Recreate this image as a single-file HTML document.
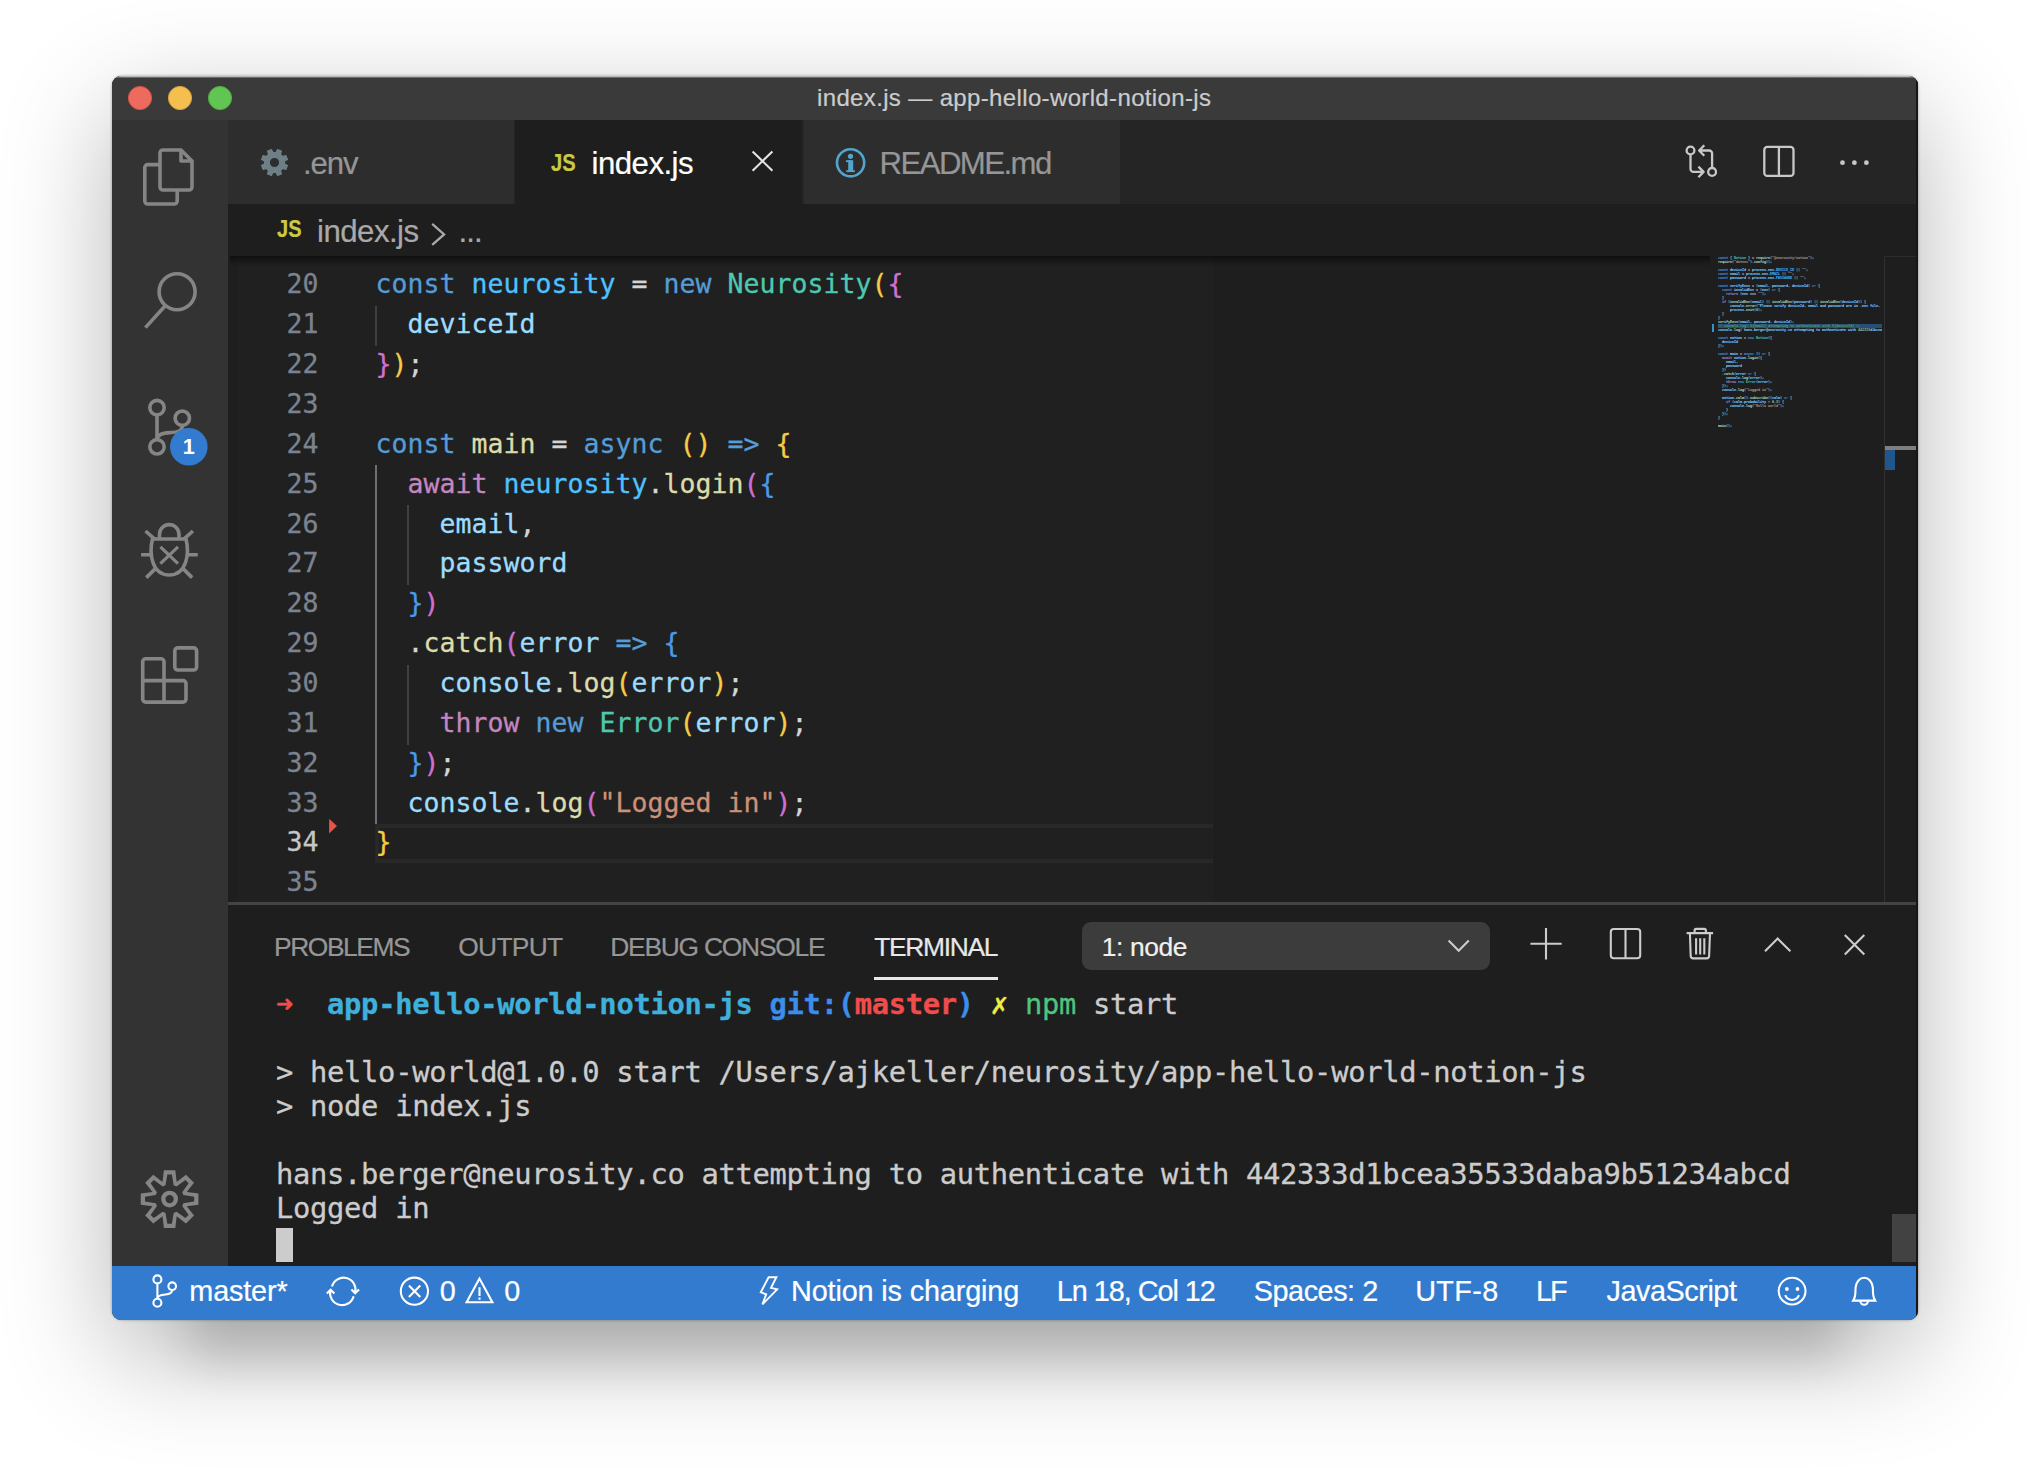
<!DOCTYPE html>
<html lang="en">
<head>
<meta charset="utf-8">
<title>index.js — app-hello-world-notion-js</title>
<style>
html,body{margin:0;padding:0;background:#fff;}
body{width:2030px;height:1468px;overflow:hidden;position:relative;font-family:"Liberation Sans",sans-serif;}
#win{position:absolute;left:112px;top:76px;width:1806px;height:1244px;border-radius:9px;overflow:hidden;background:#1e1e1e;}
#shadow{position:absolute;left:112px;top:76px;width:1806px;height:1244px;border-radius:10px;box-shadow:0 34px 108px rgba(0,0,0,.29),0 122px 41px -80px rgba(0,0,0,.12),0 0 3px rgba(0,0,0,.35);}
#pg{position:absolute;left:-112px;top:-76px;width:2030px;height:1468px;}
#pg div,#pg span,#pg svg{position:absolute;}
.t{white-space:pre;line-height:1;-webkit-text-stroke:.22px;}
/* regions */
#titlebar{left:112px;top:76px;width:1806px;height:44px;background:#3a3a3a;}
#titlehi{left:112px;top:76px;width:1806px;height:2px;background:linear-gradient(to bottom,#b8b8b8 0,#b8b8b8 50%,#6c6c6c 50%,#6c6c6c 100%);}
#activity{left:112px;top:120px;width:116px;height:1146px;background:#333333;}
#tabbar{left:228px;top:120px;width:1690px;height:84px;background:#252526;}
#tab1{left:228px;top:120px;width:286px;height:84px;background:#2d2d2d;}
#tab2{left:515px;top:120px;width:287px;height:84px;background:#1e1e1e;}
#tab3{left:804px;top:120px;width:316px;height:84px;background:#2d2d2d;}
#crumbs{left:228px;top:204px;width:1690px;height:52px;background:#1e1e1e;}
#editor{left:228px;top:256px;width:1690px;height:646px;background:#1e1e1e;overflow:hidden;}
#panel{left:228px;top:902px;width:1690px;height:364px;background:#1e1e1e;}
#panelborder{left:228px;top:902px;width:1690px;height:3px;background:#444444;}
#status{left:112px;top:1266px;width:1806px;height:54px;background:#327bcf;}
.ig{width:2px;background:#404040;}
.ig.act{background:#707070;}
#mm span,#mm .mml{position:static!important;}
.tl,.cl,.ln{-webkit-text-stroke:.3px;}
.cl,.ln{font-family:"DejaVu Sans Mono","Liberation Mono",monospace;font-size:26.5px;letter-spacing:0.046px;white-space:pre;line-height:1;}.ln{color:#7b8390;left:286.6px;}.cl{left:375.4px;color:#d4d4d4;}.cl span{position:static!important;}
.tl{font-family:"DejaVu Sans Mono","Liberation Mono",monospace;font-size:28.8px;letter-spacing:-0.319px;white-space:pre;line-height:1;color:#cccccc;left:276.0px;}.tl span{position:static!important;}.tl b{font-weight:700;}
</style>
</head>
<body>
<div id="shadow"></div>
<div id="win"><div id="pg">
<div id="titlebar"></div><div id="titlehi"></div>
<div id="activity"></div>
<div id="tabbar"></div><div id="tab1"></div><div id="tab2"></div><div id="tab3"></div>
<div id="crumbs"></div>
<div id="editor"></div>
<div id="panel"></div><div id="panelborder"></div>
<div id="status"></div>
<div id="edlight" style="left:237px;top:256px;width:976px;height:646px;background:#202020;"></div>
<div id="edshadow" style="left:230px;top:256px;width:1480px;height:10px;background:linear-gradient(to bottom,rgba(0,0,0,.55) 0,rgba(0,0,0,.28) 40%,rgba(0,0,0,0) 100%);"></div>
<!-- indent guides -->
<div class="ig" style="left:375.2px;top:306.1px;height:40.3px;"></div>
<div class="ig act" style="left:375.2px;top:464.6px;height:359.6px;"></div>
<div class="ig" style="left:406.9px;top:505.3px;height:79.9px;"></div>
<div class="ig" style="left:406.9px;top:664.7px;height:79.9px;"></div>
<!-- current line -->
<div id="curline" style="left:375.2px;top:824.2px;width:837.8px;height:39px;box-sizing:border-box;border:4px solid #282828;border-right:0;"></div>
<!-- deleted-lines gutter triangle -->
<svg style="left:328px;top:817px" width="12" height="18" viewBox="0 0 12 18"><path d="M1.1 1.7 L9 9.1 L1.1 16.5 Z" fill="#e5534b"/></svg>
<!-- overview ruler -->
<div style="left:1884px;top:256px;width:1px;height:646px;background:#303030;"></div>
<div style="left:1884px;top:256px;width:32px;height:1px;background:#2c2c2c;"></div>
<div style="left:1885px;top:446.2px;width:31px;height:4.2px;background:#7f7f7f;"></div>
<div style="left:1885px;top:450.3px;width:10px;height:20px;background:#20568c;"></div>
<!-- panel bits -->
<div style="left:874px;top:977px;width:124px;height:2.5px;background:#e7e7e7;"></div>
<div id="select" style="left:1082px;top:922px;width:408px;height:48px;border-radius:9px;background:#3c3c3c;"></div>
<div id="tcursor" style="left:276.3px;top:1228px;width:16.8px;height:34px;background:#cccccc;"></div>
<div id="tscroll" style="left:1892px;top:1214px;width:24px;height:48px;background:#424242;"></div>
<!-- right window edge -->
<div style="left:1916px;top:76px;width:2px;height:1244px;background:#161616;"></div>

<div style="left:1717.8px;top:324.0px;width:164.2px;height:4.0px;background:#264f78;"></div>
<div style="left:1711.8px;top:324.0px;width:2.4px;height:8.0px;background:#3a90c8;"></div>
<div id="mm" style="left:1717.8px;top:256.0px;width:789.89px;height:828.42px;overflow:hidden;transform:scale(0.20762);transform-origin:0 0;font-family:'DejaVu Sans Mono','Liberation Mono',monospace;font-weight:700;font-size:16.0px;line-height:19.266px;white-space:pre;color:#d4d4d4;opacity:.95;"><div style="position:static" class="mml"><span style="color:#569cd6">const</span> { <span style="color:#4ec9b0">Notion</span> } = <span style="color:#dcdcaa">require</span>(<span style="color:#ce9178">&quot;@neurosity/notion&quot;</span>);
<span style="color:#dcdcaa">require</span>(<span style="color:#ce9178">&quot;dotenv&quot;</span>).<span style="color:#dcdcaa">config</span>();

<span style="color:#569cd6">const</span> <span style="color:#9cdcfe">deviceId</span> = <span style="color:#9cdcfe">process</span>.<span style="color:#9cdcfe">env</span>.<span style="color:#4fc1ff">DEVICE_ID</span> || <span style="color:#ce9178">&quot;&quot;</span>;
<span style="color:#569cd6">const</span> <span style="color:#9cdcfe">email</span> = <span style="color:#9cdcfe">process</span>.<span style="color:#9cdcfe">env</span>.<span style="color:#4fc1ff">EMAIL</span> || <span style="color:#ce9178">&quot;&quot;</span>;
<span style="color:#569cd6">const</span> <span style="color:#9cdcfe">password</span> = <span style="color:#9cdcfe">process</span>.<span style="color:#9cdcfe">env</span>.<span style="color:#4fc1ff">PASSWORD</span> || <span style="color:#ce9178">&quot;&quot;</span>;

<span style="color:#569cd6">const</span> <span style="color:#9cdcfe">verifyEnvs</span> = (<span style="color:#9cdcfe">email</span>, <span style="color:#9cdcfe">password</span>, <span style="color:#9cdcfe">deviceId</span>) <span style="color:#569cd6">=&gt;</span> {
  <span style="color:#569cd6">const</span> <span style="color:#9cdcfe">invalidEnv</span> = (<span style="color:#9cdcfe">env</span>) <span style="color:#569cd6">=&gt;</span> {
    <span style="color:#c586c0">return</span> (<span style="color:#9cdcfe">env</span> === <span style="color:#ce9178">&quot;&quot;</span>);
  }
  <span style="color:#c586c0">if</span> (<span style="color:#dcdcaa">invalidEnv</span>(<span style="color:#9cdcfe">email</span>) || <span style="color:#dcdcaa">invalidEnv</span>(<span style="color:#9cdcfe">password</span>) || <span style="color:#dcdcaa">invalidEnv</span>(<span style="color:#9cdcfe">deviceId</span>)) {
      <span style="color:#9cdcfe">console</span>.<span style="color:#dcdcaa">error</span>(&quot;<span style="color:#9cdcfe">Please</span> <span style="color:#9cdcfe">verify</span> <span style="color:#9cdcfe">deviceId</span>, <span style="color:#9cdcfe">email</span> <span style="color:#9cdcfe">and</span> <span style="color:#9cdcfe">password</span> <span style="color:#9cdcfe">are</span> <span style="color:#9cdcfe">in</span> .<span style="color:#9cdcfe">env</span> <span style="color:#9cdcfe">file</span>, 
      <span style="color:#9cdcfe">process</span>.<span style="color:#dcdcaa">exit</span>(<span style="color:#b5cea8">0</span>);
  }
}
<span style="color:#dcdcaa">verifyEnvs</span>(<span style="color:#9cdcfe">email</span>, <span style="color:#9cdcfe">password</span>, <span style="color:#9cdcfe">deviceId</span>);
<span style="color:#6a9955">// console.log(`${email} attempting to authenticate with ${deviceId}`);</span>
<span style="color:#9cdcfe">console</span>.<span style="color:#dcdcaa">log</span>(`<span style="color:#9cdcfe">hans</span>.<span style="color:#9cdcfe">berger</span>@<span style="color:#9cdcfe">neurosity</span>.<span style="color:#9cdcfe">co</span> <span style="color:#9cdcfe">attempting</span> <span style="color:#9cdcfe">to</span> <span style="color:#9cdcfe">authenticate</span> <span style="color:#9cdcfe">with</span> <span style="color:#b5cea8">442333</span><span style="color:#9cdcfe">d1bcea</span>

<span style="color:#569cd6">const</span> <span style="color:#9cdcfe">notion</span> = <span style="color:#569cd6">new</span> <span style="color:#4ec9b0">Notion</span>({
  <span style="color:#9cdcfe">deviceId</span>
});

<span style="color:#569cd6">const</span> <span style="color:#9cdcfe">main</span> = <span style="color:#569cd6">async</span> () <span style="color:#569cd6">=&gt;</span> {
  <span style="color:#c586c0">await</span> <span style="color:#9cdcfe">notion</span>.<span style="color:#dcdcaa">login</span>({
    <span style="color:#9cdcfe">email</span>,
    <span style="color:#9cdcfe">password</span>
  })
  .<span style="color:#dcdcaa">catch</span>(<span style="color:#9cdcfe">error</span> <span style="color:#569cd6">=&gt;</span> {
    <span style="color:#9cdcfe">console</span>.<span style="color:#dcdcaa">log</span>(<span style="color:#9cdcfe">error</span>);
    <span style="color:#c586c0">throw</span> <span style="color:#569cd6">new</span> <span style="color:#4ec9b0">Error</span>(<span style="color:#9cdcfe">error</span>);
  });
  <span style="color:#9cdcfe">console</span>.<span style="color:#dcdcaa">log</span>(<span style="color:#ce9178">&quot;Logged in&quot;</span>);

  <span style="color:#9cdcfe">notion</span>.<span style="color:#dcdcaa">calm</span>().<span style="color:#dcdcaa">subscribe</span>((<span style="color:#9cdcfe">calm</span>) <span style="color:#569cd6">=&gt;</span> {
    <span style="color:#c586c0">if</span> (<span style="color:#9cdcfe">calm</span>.<span style="color:#9cdcfe">probability</span> &gt; <span style="color:#b5cea8">0.3</span>) {
      <span style="color:#9cdcfe">console</span>.<span style="color:#dcdcaa">log</span>(<span style="color:#ce9178">&quot;Hello world&quot;</span>);
    }
  });
}

<span style="color:#dcdcaa">main</span>();</div></div>
<span class="t" style='left:817.00px;top:85.90px;font-size:24px;color:#cccccc;letter-spacing:0.357px;'>index.js — app-hello-world-notion-js</span>
<span class="t" style='left:303.00px;top:147.50px;font-size:31.2px;color:#969696;letter-spacing:-1.118px;'>.env</span>
<span class="t" style='left:591.60px;top:147.50px;font-size:31.2px;color:#ffffff;letter-spacing:-0.536px;'>index.js</span>
<span class="t" style='left:879.50px;top:147.50px;font-size:31.2px;color:#969696;letter-spacing:-1.572px;'>README.md</span>
<span class="t" style='left:317.00px;top:215.70px;font-size:31.2px;color:#a9a9a9;letter-spacing:-0.522px;'>index.js</span>
<span class="t" style='left:458.50px;top:215.70px;font-size:31.2px;color:#a9a9a9;letter-spacing:-0.915px;'>...</span>
<span class="t" style='left:274.00px;top:933.50px;font-size:26.4px;color:#969696;letter-spacing:-1.436px;'>PROBLEMS</span>
<span class="t" style='left:458.30px;top:933.50px;font-size:26.4px;color:#969696;letter-spacing:-0.733px;'>OUTPUT</span>
<span class="t" style='left:610.20px;top:933.50px;font-size:26.4px;color:#969696;letter-spacing:-1.236px;'>DEBUG CONSOLE</span>
<span class="t" style='left:874.30px;top:933.50px;font-size:26.4px;color:#e7e7e7;letter-spacing:-1.337px;'>TERMINAL</span>
<span class="t" style='left:1101.80px;top:934.00px;font-size:26.4px;color:#f0f0f0;letter-spacing:-0.396px;'>1: node</span>
<span class="t" style='left:189.30px;top:1276.70px;font-size:28.8px;color:#ffffff;letter-spacing:-0.151px;'>master*</span>
<span class="t" style='left:439.70px;top:1276.70px;font-size:28.8px;color:#ffffff;'>0</span>
<span class="t" style='left:504.30px;top:1276.70px;font-size:28.8px;color:#ffffff;'>0</span>
<span class="t" style='left:791.00px;top:1276.70px;font-size:28.8px;color:#ffffff;letter-spacing:-0.134px;'>Notion is charging</span>
<span class="t" style='left:1056.70px;top:1276.70px;font-size:28.8px;color:#ffffff;letter-spacing:-1.016px;'>Ln 18, Col 12</span>
<span class="t" style='left:1253.80px;top:1276.70px;font-size:28.8px;color:#ffffff;letter-spacing:-0.456px;'>Spaces: 2</span>
<span class="t" style='left:1415.20px;top:1276.70px;font-size:28.8px;color:#ffffff;letter-spacing:0.358px;'>UTF-8</span>
<span class="t" style='left:1535.90px;top:1276.70px;font-size:28.8px;color:#ffffff;letter-spacing:-2.015px;'>LF</span>
<span class="t" style='left:1606.60px;top:1276.70px;font-size:28.8px;color:#ffffff;letter-spacing:-0.460px;'>JavaScript</span>
<span class="t" style="left:550.5px;top:151.25px;font-size:24.7px;font-weight:700;color:#cbcb41;transform:scaleX(.815);transform-origin:0 0;">JS</span>
<span class="t" style="left:277px;top:217.55px;font-size:23.7px;font-weight:700;color:#cbcb41;transform:scaleX(.845);transform-origin:0 0;">JS</span>

<div class="ln" style="top:271.48px;">20</div>
<div class="cl" style="top:271.48px;"><span style="color:#569cd6">const</span> <span style="color:#4fc1ff">neurosity</span> = <span style="color:#569cd6">new</span> <span style="color:#4ec9b0">Neurosity</span><span style="color:#f7cb45">(</span><span style="color:#d06fd0">{</span></div>
<div class="ln" style="top:311.33px;">21</div>
<div class="cl" style="top:311.33px;">  <span style="color:#9cdcfe">deviceId</span></div>
<div class="ln" style="top:351.18px;">22</div>
<div class="cl" style="top:351.18px;"><span style="color:#d06fd0">}</span><span style="color:#f7cb45">)</span>;</div>
<div class="ln" style="top:391.03px;">23</div>
<div class="ln" style="top:430.88px;">24</div>
<div class="cl" style="top:430.88px;"><span style="color:#569cd6">const</span> <span style="color:#dcdcaa">main</span> = <span style="color:#569cd6">async</span> <span style="color:#f7cb45">()</span> <span style="color:#569cd6">=&gt;</span> <span style="color:#f7cb45">{</span></div>
<div class="ln" style="top:470.73px;">25</div>
<div class="cl" style="top:470.73px;">  <span style="color:#c586c0">await</span> <span style="color:#4fc1ff">neurosity</span>.<span style="color:#dcdcaa">login</span><span style="color:#d06fd0">(</span><span style="color:#4a9ae8">{</span></div>
<div class="ln" style="top:510.58px;">26</div>
<div class="cl" style="top:510.58px;">    <span style="color:#9cdcfe">email</span>,</div>
<div class="ln" style="top:550.43px;">27</div>
<div class="cl" style="top:550.43px;">    <span style="color:#9cdcfe">password</span></div>
<div class="ln" style="top:590.28px;">28</div>
<div class="cl" style="top:590.28px;">  <span style="color:#4a9ae8">}</span><span style="color:#d06fd0">)</span></div>
<div class="ln" style="top:630.13px;">29</div>
<div class="cl" style="top:630.13px;">  .<span style="color:#dcdcaa">catch</span><span style="color:#d06fd0">(</span><span style="color:#9cdcfe">error</span> <span style="color:#569cd6">=&gt;</span> <span style="color:#4a9ae8">{</span></div>
<div class="ln" style="top:669.98px;">30</div>
<div class="cl" style="top:669.98px;">    <span style="color:#9cdcfe">console</span>.<span style="color:#dcdcaa">log</span><span style="color:#f7cb45">(</span><span style="color:#9cdcfe">error</span><span style="color:#f7cb45">)</span>;</div>
<div class="ln" style="top:709.83px;">31</div>
<div class="cl" style="top:709.83px;">    <span style="color:#c586c0">throw</span> <span style="color:#569cd6">new</span> <span style="color:#4ec9b0">Error</span><span style="color:#f7cb45">(</span><span style="color:#9cdcfe">error</span><span style="color:#f7cb45">)</span>;</div>
<div class="ln" style="top:749.68px;">32</div>
<div class="cl" style="top:749.68px;">  <span style="color:#4a9ae8">}</span><span style="color:#d06fd0">)</span>;</div>
<div class="ln" style="top:789.53px;">33</div>
<div class="cl" style="top:789.53px;">  <span style="color:#9cdcfe">console</span>.<span style="color:#dcdcaa">log</span><span style="color:#d06fd0">(</span><span style="color:#ce9178">&quot;Logged in&quot;</span><span style="color:#d06fd0">)</span>;</div>
<div class="ln" style="top:829.38px;color:#c6c6c6;">34</div>
<div class="cl" style="top:829.38px;"><span style="color:#f7cb45">}</span></div>
<div class="ln" style="top:869.23px;">35</div>
<div class="tl" style="top:989.94px;"><span style="color:#f14c4c"><b>➜</b></span>  <span style="color:#3fb0dc"><b>app-hello-world-notion-js</b></span> <span style="color:#3b8eea"><b>git:(</b></span><span style="color:#f14c4c"><b>master</b></span><span style="color:#3b8eea"><b>)</b></span> <span style="color:#eeee44"><b>✗</b></span> <span style="color:#4fc47e">npm</span> start</div>
<div class="tl" style="top:1057.94px;">&gt; hello-world@1.0.0 start /Users/ajkeller/neurosity/app-hello-world-notion-js</div>
<div class="tl" style="top:1091.94px;">&gt; node index.js</div>
<div class="tl" style="top:1159.94px;">hans.berger@neurosity.co attempting to authenticate with 442333d1bcea35533daba9b51234abcd</div>
<div class="tl" style="top:1193.94px;">Logged in</div>
<svg id="ico" width="2030" height="1468" viewBox="0 0 2030 1468" style="left:0;top:0" fill="none" stroke-linecap="butt" stroke-linejoin="round">
<circle cx="140" cy="98" r="11.6" fill="#ed6a5e" stroke="#d05348" stroke-width="1"/>
<circle cx="180" cy="98" r="11.6" fill="#f5bf4f" stroke="#d6a243" stroke-width="1"/>
<circle cx="220" cy="98" r="11.6" fill="#61c554" stroke="#52a842" stroke-width="1"/>
<g stroke="#858585" stroke-width="3.6">
<path d="M181 150 L192 161 V187 a3 3 0 0 1 -3 3 H163 a3 3 0 0 1 -3 -3 V153 a3 3 0 0 1 3 -3 Z"/>
<path d="M181 150 V161 H192" />
<path d="M160 164.6 H147.8 a3 3 0 0 0 -3 3 V201 a3 3 0 0 0 3 3 H174.2 a3 3 0 0 0 3 -3 V190"/>
<circle cx="177.1" cy="291.8" r="18"/>
<path d="M164.8 306.2 L145.4 327.6"/>
<circle cx="157" cy="407.6" r="7.2"/><circle cx="182.3" cy="418.2" r="7.2"/><circle cx="157" cy="446.8" r="7.2"/>
<path d="M157 414.8 V439.6"/>
<path d="M182.3 425.4 C182.3 431 178 432.3 170 432.6 C162 433 157 435 157 439.6"/>
<path d="M152.5 539 H186 C189.5 553 187 575 169.2 575 C151.5 575 149 553 152.5 539 Z"/>
<path d="M159.5 538.5 V534.4 A9.75 9.75 0 0 1 179 534.4 V538.5"/>
<path d="M145.5 531 L155 539.4 M192.9 531 L183.6 539.4 M141.1 554.7 H150.5 M188 554.7 H197.8 M146.3 577.6 L155.6 568.4 M192.1 577.6 L182.8 568.4"/>
<path d="M160.4 546.8 L178 563.6 M178 546.8 L160.4 563.6" stroke-width="3.2"/>
<path d="M145.7 658.8 H161 a3 3 0 0 1 3 3 V680.6 H183 a3 3 0 0 1 3 3 V699.1 a3 3 0 0 1 -3 3 H145.7 a3 3 0 0 1 -3 -3 V661.8 a3 3 0 0 1 3 -3 Z"/>
<path d="M142.7 680.6 H164 V702.1"/>
<rect x="174.8" y="647.9" width="21.8" height="22.1" rx="3"/>
</g>
<circle cx="188.8" cy="446.8" r="18.8" fill="#327bcf"/>
<text x="188.8" y="453.8" text-anchor="middle" font-family="Liberation Sans, sans-serif" font-weight="700" font-size="21.6" fill="#ffffff">1</text>
<path d="M162.52 1182.01 L163.89 1170.26 L175.31 1170.26 L176.68 1182.01 L185.96 1174.67 L194.03 1182.74 L186.69 1192.02 L198.44 1193.39 L198.44 1204.81 L186.69 1206.18 L194.03 1215.46 L185.96 1223.53 L176.68 1216.19 L175.31 1227.94 L163.89 1227.94 L162.52 1216.19 L153.24 1223.53 L145.17 1215.46 L152.51 1206.18 L140.76 1204.81 L140.76 1193.39 L152.51 1192.02 L145.17 1182.74 L153.24 1174.67 Z M165.51 1185.29 L167.32 1174.51 L171.88 1174.51 L173.69 1185.29 L176.47 1186.45 L185.38 1180.10 L188.60 1183.32 L182.25 1192.23 L183.41 1195.01 L194.19 1196.82 L194.19 1201.38 L183.41 1203.19 L182.25 1205.97 L188.60 1214.88 L185.38 1218.10 L176.47 1211.75 L173.69 1212.91 L171.88 1223.69 L167.32 1223.69 L165.51 1212.91 L162.73 1211.75 L153.82 1218.10 L150.60 1214.88 L156.95 1205.97 L155.79 1203.19 L145.01 1201.38 L145.01 1196.82 L155.79 1195.01 L156.95 1192.23 L150.60 1183.32 L153.82 1180.10 L162.73 1186.45 Z" fill="#858585" fill-rule="evenodd" stroke="none"/>
<circle cx="169.6" cy="1199.1" r="6.3" stroke="#858585" stroke-width="4.3"/>
<path d="M275.99 152.51 L277.60 149.57 L281.45 151.16 L280.51 154.38 L282.62 156.49 L285.84 155.55 L287.43 159.40 L284.49 161.01 L284.49 163.99 L287.43 165.60 L285.84 169.45 L282.62 168.51 L280.51 170.62 L281.45 173.84 L277.60 175.43 L275.99 172.49 L273.01 172.49 L271.40 175.43 L267.55 173.84 L268.49 170.62 L266.38 168.51 L263.16 169.45 L261.57 165.60 L264.51 163.99 L264.51 161.01 L261.57 159.40 L263.16 155.55 L266.38 156.49 L268.49 154.38 L267.55 151.16 L271.40 149.57 L273.01 152.51 Z M279.7 162.5 a5.2 5.2 0 1 0 -10.4 0 a5.2 5.2 0 1 0 10.4 0 Z" fill="#6d8086" fill-rule="evenodd" stroke="#6d8086" stroke-width="1.2"/>
<path d="M752.6 151.4 L772.4 170.8 M772.4 151.4 L752.6 170.8" stroke="#e4e4e4" stroke-width="2.1"/>
<circle cx="850.6" cy="162.8" r="13.6" stroke="#53a5cd" stroke-width="2.6"/>
<g fill="#53a5cd"><circle cx="850.5" cy="156.3" r="2.6"/><rect x="848.2" y="160.2" width="5" height="11"/><rect x="845.9" y="160.2" width="5" height="1.9"/><rect x="846.2" y="170.3" width="8.7" height="1.8"/></g>
<path d="M432.2 223.9 L444.1 234.4 L432.2 244.9" stroke="#a9a9a9" stroke-width="2.3" stroke-linejoin="miter"/>
<g stroke="#c8c8c8" stroke-width="2.3">
<circle cx="1690.5" cy="150.5" r="3.9"/><circle cx="1712.1" cy="171.9" r="3.9"/>
<path d="M1690.5 154.4 V168.9 a3 3 0 0 0 3 3 H1702.5 M1698.4 166.6 L1703.6 171.9 L1698.4 177.2"/>
<path d="M1712.1 168 V153.5 a3 3 0 0 0 -3 -3 H1700.2 M1704.3 145.2 L1699.1 150.5 L1704.3 155.8"/>
<rect x="1764.3" y="146.9" width="29.2" height="29" rx="3"/><path d="M1778.9 146.9 V175.9"/>
</g>
<circle cx="1842.5" cy="162.7" r="2.4" fill="#c8c8c8"/>
<circle cx="1854.4" cy="162.7" r="2.4" fill="#c8c8c8"/>
<circle cx="1866.4" cy="162.7" r="2.4" fill="#c8c8c8"/>
<g stroke="#cccccc" stroke-width="2.1">
<path d="M1448.6 940.6 L1458.7 950.8 L1468.8 940.6" stroke-linejoin="miter"/>
<path d="M1546 928 V959.4 M1530.4 943.7 H1561.7"/>
<rect x="1610.8" y="929" width="29.4" height="29.3" rx="3"/><path d="M1625.5 929 V958.3"/>
<path d="M1686.6 933.1 H1713.1 M1694.6 933.1 V930.4 a1.5 1.5 0 0 1 1.5 -1.5 H1704.4 a1.5 1.5 0 0 1 1.5 1.5 V933.1"/>
<path d="M1689.9 933.1 L1690.7 956 a2.5 2.5 0 0 0 2.5 2.4 H1706.6 a2.5 2.5 0 0 0 2.5 -2.4 L1710 933.1"/>
<path d="M1696.1 938.3 V954.6 M1700.2 938.3 V954.6 M1704.3 938.3 V954.6"/>
<path d="M1765 951.2 L1777.7 938.6 L1790.4 951.2" stroke-linejoin="miter"/>
<path d="M1844.8 935.1 L1864.3 954.6 M1864.3 935.1 L1844.8 954.6"/>
</g>
<g stroke="#ffffff" stroke-width="2.1">
<circle cx="157.4" cy="1279.4" r="4"/><circle cx="157.4" cy="1302.8" r="4"/><circle cx="172.2" cy="1286.2" r="3.8"/>
<path d="M157.4 1283.4 V1298.8 M172.2 1290 C172.2 1293.6 169.5 1294.2 165.5 1294.5 C160.5 1294.9 157.4 1295.6 157.4 1298.8"/>
<path d="M332.0 1286.6 A11.7 11.7 0 0 1 355.1 1292.6"/>
<path d="M353.6 1296.2 A11.7 11.7 0 0 1 330.5 1290.2"/>
<path d="M326.8 1293.5 L330.6 1289.7 L334.4 1293.5" stroke-linejoin="miter"/>
<path d="M351.4 1289.4 L355.2 1293.2 L359.0 1289.4" stroke-linejoin="miter"/>
<circle cx="414.4" cy="1291.2" r="13.6"/><path d="M408.9 1285.6 L420.3 1297 M420.3 1285.6 L408.9 1297"/>
<path d="M479.5 1278.6 L466.6 1302.2 H492.4 Z" stroke-linejoin="miter"/><path d="M479.5 1287.2 V1296 M479.5 1297.4 V1299.8"/>
<path d="M768.6 1277.3 H776.4 L771 1287.9 L777.2 1289.3 L762.4 1304.4 L766.2 1294.3 L760.8 1292.3 Z" stroke-width="1.9" stroke-linejoin="miter"/>
<circle cx="1792.1" cy="1291.1" r="13.4"/><path d="M1785.2 1295.2 A7.4 7.4 0 0 0 1799 1295.2"/>
<path d="M1853.2 1300.6 H1875.2 C1872.2 1296 1873.2 1292 1872.8 1287.4 C1872.2 1281.6 1868.6 1277.8 1864.2 1277.8 C1859.8 1277.8 1856.2 1281.6 1855.6 1287.4 C1855.2 1292 1856.2 1296 1853.2 1300.6 Z" stroke-linejoin="miter"/>
<path d="M1860.4 1301 A3.8 3.8 0 0 0 1868 1301"/>
</g>
<circle cx="1786.9" cy="1289" r="1.9" fill="#fff"/><circle cx="1797.5" cy="1289" r="1.9" fill="#fff"/>
</svg>
</div></div>
</body>
</html>
